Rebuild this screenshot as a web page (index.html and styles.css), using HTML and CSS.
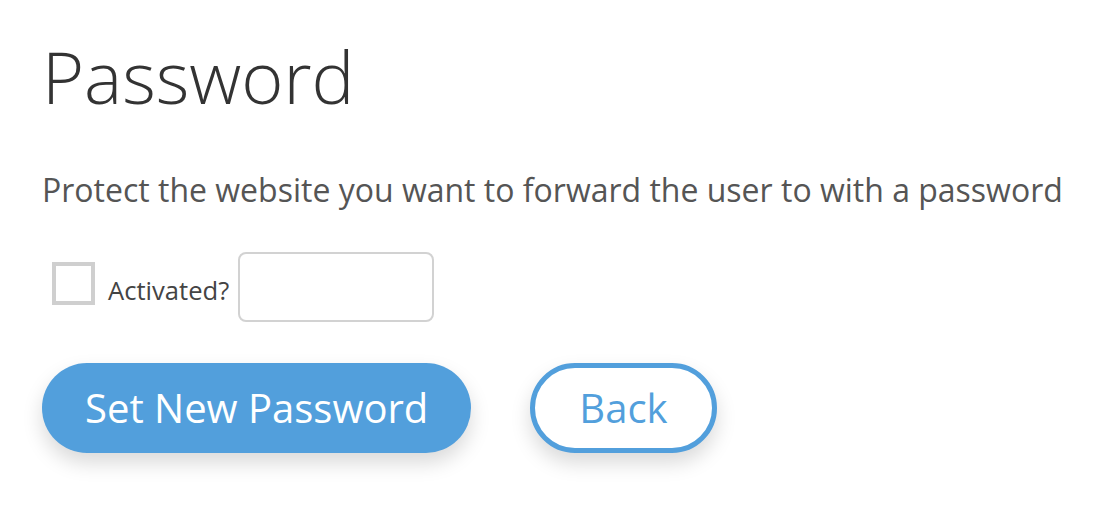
FILE: index.html
```html
<!DOCTYPE html>
<html lang="en">
<head>
<meta charset="utf-8">
<title>Password</title>
<link rel="stylesheet" href="styles.css">
</head>
<body>
<main class="page">
  <h1 class="title">Password</h1>
  <p class="lead">Protect the website you want to forward the user to with a password</p>
  <div class="field-row">
    <label class="check">
      <input type="checkbox" class="check-input">
      <span class="check-box"></span>
      <span class="check-label">Activated?</span>
    </label>
    <input type="text" class="text-input" aria-label="Password">
  </div>
  <div class="actions">
    <button class="btn btn-primary" type="button">Set New Password</button>
    <button class="btn btn-outline" type="button">Back</button>
  </div>
</main>
</body>
</html>
```
FILE: styles.css
```css
html, body {
  margin: 0;
  padding: 0;
  background: #ffffff;
}

body {
  font-family: "Open Sans", "Liberation Sans", sans-serif;
  min-height: 516px;
}

.page {
  padding: 31px 0 60px 42px;
}

.title {
  margin: 0;
  font-size: 72px;
  line-height: 90px;
  font-weight: 300;
  color: #333333;
}

.lead {
  margin: 49px 0 0 0;
  font-size: 32px;
  line-height: 40px;
  font-weight: 400;
  color: #555555;
}

.field-row {
  display: flex;
  align-items: flex-start;
  margin-top: 42px;
  height: 70px;
}

.check {
  display: flex;
  align-items: flex-start;
  cursor: pointer;
}

.check-input {
  position: absolute;
  opacity: 0;
  width: 0;
  height: 0;
  margin: 0;
}

.check-box {
  box-sizing: border-box;
  width: 43px;
  height: 43px;
  margin: 10px 0 0 10px;
  border: 4px solid #cfcfcf;
  background: #ffffff;
}

.check-label {
  margin: 24px 0 0 13px;
  font-size: 25.6px;
  line-height: 30px;
  color: #444444;
}

.text-input {
  box-sizing: border-box;
  width: 196px;
  height: 70px;
  margin: 0 0 0 9px;
  border: 2px solid #d2d2d2;
  border-radius: 8px;
  background: #ffffff;
  outline: none;
  font-family: inherit;
  font-size: 22px;
  padding: 0 12px;
}

.actions {
  display: flex;
  align-items: center;
  gap: 59px;
  margin-top: 41px;
}

.btn {
  box-sizing: border-box;
  height: 90px;
  border-radius: 45px;
  font-family: inherit;
  font-size: 40px;
  font-weight: 400;
  line-height: 1;
  cursor: pointer;
  box-shadow: 0 10px 20px rgba(0, 0, 0, 0.15);
}

.btn-primary {
  padding: 0 43px;
  background: #529fdc;
  border: none;
  color: #ffffff;
}

.btn-outline {
  padding: 0 44px;
  background: #ffffff;
  border: 5px solid #529fdc;
  color: #529fdc;
}
```
